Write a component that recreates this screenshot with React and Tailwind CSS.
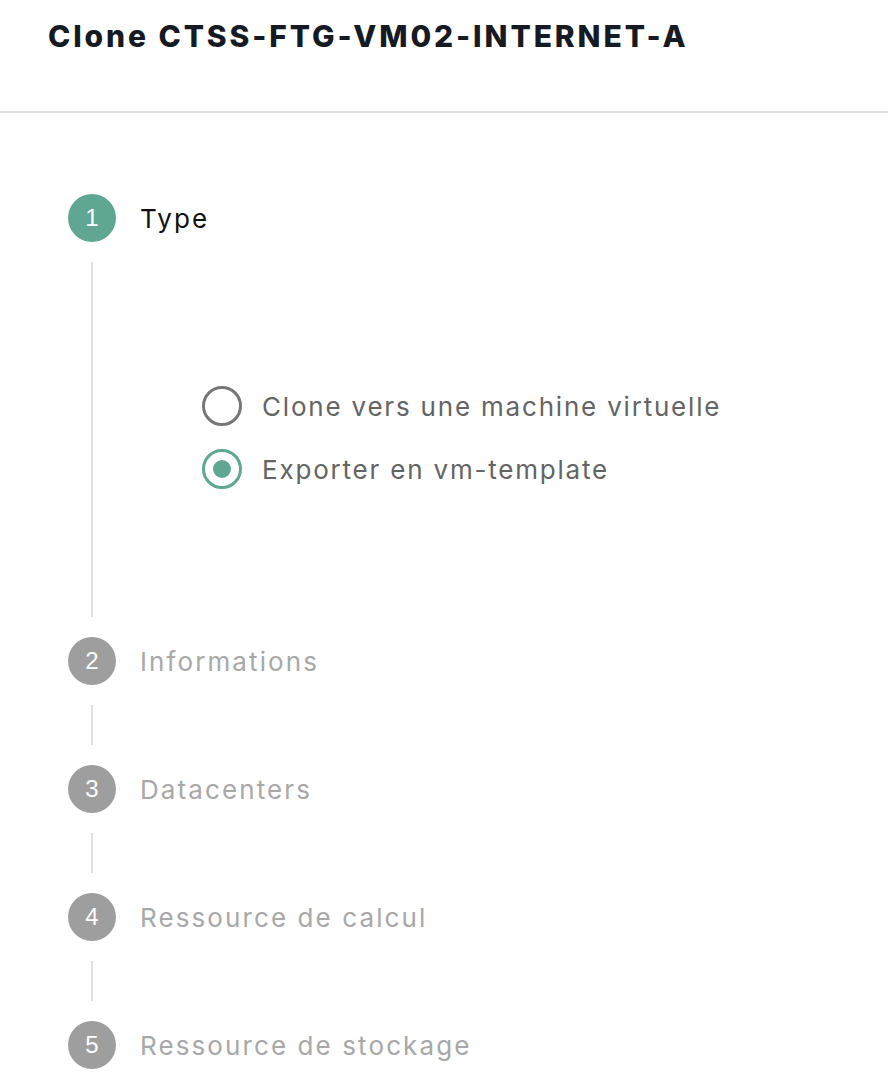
import React, { useState } from "react";

const steps = [
  { n: 1, label: "Type" },
  { n: 2, label: "Informations" },
  { n: 3, label: "Datacenters" },
  { n: 4, label: "Ressource de calcul" },
  { n: 5, label: "Ressource de stockage" },
];

function Radio({ checked, label, onClick }) {
  return (
    <button onClick={onClick} className="flex items-center gap-5 h-10 text-left">
      <span
        className={`flex items-center justify-center w-10 h-10 rounded-full border-[3.5px] ${
          checked ? "border-[#5fa793]" : "border-[#777777]"
        }`}
      >
        {checked && <span className="w-[18px] h-[18px] rounded-full bg-[#5fa793]" />}
      </span>
      <span className="text-[26px] text-[#646464] tracking-[1.8px]">{label}</span>
    </button>
  );
}

export default function App() {
  const [type, setType] = useState("template");
  const current = 1;

  return (
    <div className="min-h-screen bg-white font-['Inter',sans-serif]">
      {/* Header */}
      <div className="h-[113px] border-b-2 border-[#e2e2e2] px-12 pt-[14px]">
        <h1 className="text-[30px] font-extrabold text-[#161a23] tracking-[2.9px]">
          Clone CTSS-FTG-VM02-INTERNET-A
        </h1>
      </div>

      {/* Stepper */}
      <div className="pl-[68px] pt-[81px]">
        {steps.map((s, i) => {
          const active = s.n === current;
          return (
            <div key={s.n}>
              <div className="flex items-center gap-6">
                <div
                  className={`w-12 h-12 rounded-full flex items-center justify-center text-white text-[24px] font-['Liberation_Sans',sans-serif] ${
                    active ? "bg-[#5fa793]" : "bg-[#9e9e9e]"
                  }`}
                >
                  {s.n}
                </div>
                <span
                  className={`text-[26px] tracking-[2.1px] ${
                    active ? "text-[#111111]" : "text-[#a8a8a8]"
                  }`}
                >
                  {s.label}
                </span>
              </div>
              {i < steps.length - 1 && (
                <div className="flex">
                  <div className="w-12 flex justify-center py-5">
                    <div
                      className={`w-0.5 bg-[#e0e0e0] ${active ? "h-[355px]" : "h-10"}`}
                    />
                  </div>
                  {active && (
                    <div className="pl-[86px] pt-[144px] flex flex-col gap-[23px]">
                      <Radio
                        checked={type === "vm"}
                        label="Clone vers une machine virtuelle"
                        onClick={() => setType("vm")}
                      />
                      <Radio
                        checked={type === "template"}
                        label="Exporter en vm-template"
                        onClick={() => setType("template")}
                      />
                    </div>
                  )}
                </div>
              )}
            </div>
          );
        })}
      </div>
    </div>
  );
}
